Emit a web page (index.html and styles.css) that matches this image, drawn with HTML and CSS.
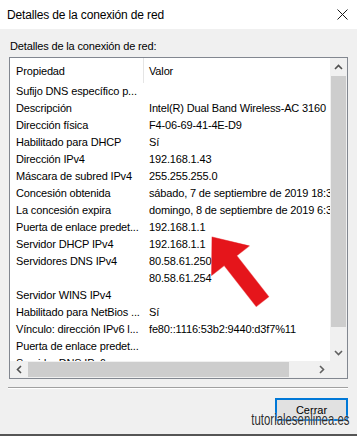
FILE: index.html
```html
<!DOCTYPE html>
<html lang="es">

<head>
    <meta charset="UTF-8" />
    <title>Detalles de la conexión de red</title>
    <link rel="stylesheet" href="styles.css">
</head>

<body>

    <div class="window">
        <div class="titlebar">
            <span class="title">Detalles de la conexión de red</span>
            <svg class="close-icon" width="11" height="11" viewBox="0 0 11 11">
                <path d="M0.5 0.5 L10.5 10.5 M10.5 0.5 L0.5 10.5" stroke="#1a1a1a" stroke-width="1" />
            </svg>
        </div>

        <div class="label">Detalles de la conexión de red:</div>

        <div class="listbox">
            <div class="viewport">
                <div class="list-header">
                    <div class="col">Propiedad</div>
                    <div class="col">Valor</div>
                </div>
                <div class="list-row"><span>Sufijo DNS específico p...</span><span></span></div>
                <div class="list-row"><span>Descripción</span><span>Intel(R) Dual Band Wireless-AC 3160</span></div>
                <div class="list-row"><span>Dirección física</span><span>F4-06-69-41-4E-D9</span></div>
                <div class="list-row"><span>Habilitado para DHCP</span><span>Sí</span></div>
                <div class="list-row"><span>Dirección IPv4</span><span>192.168.1.43</span></div>
                <div class="list-row"><span>Máscara de subred IPv4</span><span>255.255.255.0</span></div>
                <div class="list-row"><span>Concesión obtenida</span><span>sábado, 7 de septiembre de 2019 18:35:12</span></div>
                <div class="list-row"><span>La concesión expira</span><span>domingo, 8 de septiembre de 2019 6:35:12</span></div>
                <div class="list-row"><span>Puerta de enlace predet...</span><span>192.168.1.1</span></div>
                <div class="list-row"><span>Servidor DHCP IPv4</span><span>192.168.1.1</span></div>
                <div class="list-row"><span>Servidores DNS IPv4</span><span>80.58.61.250</span></div>
                <div class="list-row"><span></span><span>80.58.61.254</span></div>
                <div class="list-row"><span>Servidor WINS IPv4</span><span></span></div>
                <div class="list-row"><span>Habilitado para NetBios ...</span><span>Sí</span></div>
                <div class="list-row"><span>Vínculo: dirección IPv6 l...</span><span>fe80::1116:53b2:9440:d3f7%11</span></div>
                <div class="list-row"><span>Puerta de enlace predet...</span><span></span></div>
                <div class="list-row"><span>Servidor DNS IPv6</span><span></span></div>
            </div>

            <div class="vscroll">
                <div class="sb-btn">
                    <svg width="9" height="6" viewBox="0 0 9 6"><polyline points="1,5 4.5,1.5 8,5" fill="none" stroke="#505050" stroke-width="1.6" /></svg>
                </div>
                <div class="sb-thumb"></div>
                <div class="sb-track"></div>
                <div class="sb-btn">
                    <svg width="9" height="6" viewBox="0 0 9 6"><polyline points="1,1 4.5,4.5 8,1" fill="none" stroke="#606060" stroke-width="1.6" /></svg>
                </div>
            </div>

            <div class="hscroll">
                <div class="sb-btn">
                    <svg width="6" height="9" viewBox="0 0 6 9"><polyline points="5,1 1.5,4.5 5,8" fill="none" stroke="#505050" stroke-width="1.6" /></svg>
                </div>
                <div class="sb-thumb"></div>
                <div class="sb-track"></div>
                <div class="sb-btn">
                    <svg width="6" height="9" viewBox="0 0 6 9"><polyline points="1,1 4.5,4.5 1,8" fill="none" stroke="#606060" stroke-width="1.6" /></svg>
                </div>
            </div>

            <div class="corner"></div>
        </div>

        <div class="separator"></div>

        <div class="footer">
            <button class="close-btn">Cerrar</button>
        </div>

        <div class="watermark">tutorialesenlinea.es</div>

        <!-- red arrow pointing at the gateway -->
        <svg class="pointer" width="357" height="436" viewBox="0 0 357 436">
            <polygon points="0,0 30,-24 30,-8 82,-8 82,8 30,8 30,24" transform="translate(212 237) rotate(52)"
                fill="#e5151b" stroke="#e5151b" stroke-opacity="0.5" stroke-width="1" stroke-linejoin="round" />
        </svg>
    </div>

</body>

</html>
```

FILE: styles.css
```css
body {
    margin: 0;
    padding: 0;
    background: #f0f0f0;
    font-family: "Liberation Sans", Arial, sans-serif;
    font-size: 11px;
    color: #000;
}

.window {
    position: relative;
    width: 357px;
    height: 436px;
    box-sizing: border-box;
    border-bottom: 2px solid #555;
    display: flex;
    flex-direction: column;
    overflow: hidden;
}

.titlebar {
    height: 29px;
    flex-shrink: 0;
    background: #fff;
    display: flex;
    align-items: center;
    justify-content: space-between;
    padding: 0 9px 0 7px;
}

.title {
    font-size: 12px;
    letter-spacing: -0.15px;
}

.label {
    margin: 11px 0 0 10px;
    line-height: 13px;
    letter-spacing: -0.15px;
}

.listbox {
    margin: 4px 0 0 9px;
    width: 339px;
    height: 322px;
    flex-shrink: 0;
    box-sizing: border-box;
    border: 1px solid #828790;
    background: #fff;
    display: grid;
    grid-template-columns: 1fr 17px;
    grid-template-rows: 1fr 17px;
}

.viewport {
    overflow: hidden;
    white-space: nowrap;
    letter-spacing: -0.15px;
}

.list-header,
.list-row {
    display: grid;
    grid-template-columns: 134px auto;
}

.list-header {
    height: 25px;
}

.list-header .col {
    display: flex;
    align-items: center;
}

.list-header .col:first-child {
    border-right: 1px solid #e5e5e5;
    padding-left: 6px;
}

.list-header .col + .col {
    padding-left: 5px;
}

.list-row {
    height: 17px;
    line-height: 17px;
}

.list-row span:first-child {
    padding-left: 6px;
    overflow: hidden;
}

.list-row span + span {
    padding-left: 5px;
}

/* scrollbars */
.vscroll,
.hscroll {
    background: #f0f0f0;
    display: flex;
}

.vscroll {
    flex-direction: column;
}

.sb-btn {
    flex: 0 0 17px;
    display: flex;
    align-items: center;
    justify-content: center;
}

.sb-track {
    flex: 1;
}

.sb-thumb {
    background: #cdcdcd;
}

.vscroll .sb-thumb {
    height: 251px;
    margin: 1px 1px 0;
}

.hscroll .sb-thumb {
    width: 261px;
    margin: 1px 0 1px 1px;
}

.corner {
    background: #f0f0f0;
}

.separator {
    margin: 8px 9px 0 8px;
    border-top: 1px solid #a0a0a0;
    border-bottom: 1px solid #fff;
}

.footer {
    display: flex;
    justify-content: flex-end;
    padding-right: 9px;
    margin-top: 9px;
}

.close-btn {
    width: 73px;
    height: 23px;
    padding: 0;
    border: 2px solid #0078d7;
    background: #e1e1e1;
    font-family: "Liberation Sans", Arial, sans-serif;
    font-size: 11px;
    color: #000;
}

.watermark {
    position: absolute;
    right: 8px;
    top: 410px;
    font-size: 17px;
    color: #2e2e2e;
    transform: scaleX(0.67);
    transform-origin: right center;
    text-shadow: 0 0 2px #fff;
}

.pointer {
    position: absolute;
    left: 0;
    top: 0;
    pointer-events: none;
}
```
